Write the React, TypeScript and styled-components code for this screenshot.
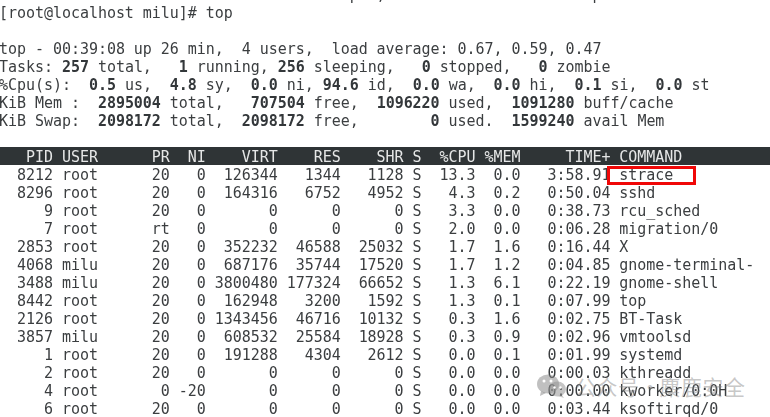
import React from "react";
import styled, { createGlobalStyle } from "styled-components";

const Global = createGlobalStyle`
  html, body { margin: 0; padding: 0; background: #fff; overflow: hidden; }
`;

const Page = styled.div`
  position: relative;
  width: 770px;
  height: 417px;
  overflow: hidden;
  background: #fff;
`;

const Terminal = styled.div`
  margin-top: -15px;
  font-family: "DejaVu Sans Mono", monospace;
  font-size: 15px;
  letter-spacing: -0.04px;
  line-height: 20px;
  color: #3b3e40;
  white-space: pre;
  filter: blur(0.25px);
`;

const Line = styled.div`
  height: 18px;
  margin-left: -1px;
`;

const HeaderBar = styled.div`
  height: 18px;
  background: #2f3436;
  color: #e6e7e7;
`;

const HeaderText = styled.div`
  margin-left: -1px;
`;

const B = styled.b`
  font-weight: 700;
  color: #33373a;
`;

const Row = styled.div`
  position: relative;
  height: 18px;
  margin-left: -1px;
`;

const Highlight = styled.div`
  position: absolute;
  left: 608px;
  top: 1px;
  width: 89px;
  height: 19px;
  box-sizing: border-box;
  border: 3px solid #f00707;
`;

const Watermark = styled.div`
  position: absolute;
  left: 537px;
  top: 372px;
  display: flex;
  align-items: center;
  gap: 9px;
  font-family: "Noto Sans CJK SC", sans-serif;
  font-size: 21px;
  font-weight: 400;
  line-height: 28px;
  letter-spacing: 0.5px;
  color: rgba(130, 130, 130, 0.45);
  white-space: pre;
`;

const Dot = styled.span`
  display: inline-block;
  width: 20px;
  text-align: center;
`;

const WechatIcon = styled.svg`
  width: 29px;
  height: 24px;
  flex: none;
`;

const rows = [
  "  8212 root      20   0  126344   1344   1128 S  13.3  0.0   3:58.91 strace",
  "  8296 root      20   0  164316   6752   4952 S   4.3  0.2   0:50.04 sshd",
  "     9 root      20   0       0      0      0 S   3.3  0.0   0:38.73 rcu_sched",
  "     7 root      rt   0       0      0      0 S   2.0  0.0   0:06.28 migration/0",
  "  2853 root      20   0  352232  46588  25032 S   1.7  1.6   0:16.44 X",
  "  4068 milu      20   0  687176  35744  17520 S   1.7  1.2   0:04.85 gnome-terminal-",
  "  3488 milu      20   0 3800480 177324  66652 S   1.3  6.1   0:22.19 gnome-shell",
  "  8442 root      20   0  162948   3200   1592 S   1.3  0.1   0:07.99 top",
  "  2126 root      20   0 1343456  46716  10132 S   0.3  1.6   0:02.75 BT-Task",
  "  3857 milu      20   0  608532  25584  18928 S   0.3  0.9   0:02.96 vmtoolsd",
  "     1 root      20   0  191288   4304   2612 S   0.0  0.1   0:01.99 systemd",
  "     2 root      20   0       0      0      0 S   0.0  0.0   0:00.03 kthreadd",
  "     4 root       0 -20       0      0      0 S   0.0  0.0   0:00.00 kworker/0:0H",
  "     6 root      20   0       0      0      0 S   0.0  0.0   0:03.44 ksoftirqd/0",
];

export default function App() {
  return (
    <Page>
      <Global />
      <Terminal>
        <Line>{"                                       p  ,                       p"}</Line>
        <Line>[root@localhost milu]# top</Line>
        <Line> </Line>
        <Line>top - 00:39:08 up 26 min,  4 users,  load average: 0.67, 0.59, 0.47</Line>
        <Line>Tasks: <B>257</B> total,   <B>1</B> running, <B>256</B> sleeping,   <B>0</B> stopped,   <B>0</B> zombie</Line>
        <Line>%Cpu(s):  <B>0.5</B> us,  <B>4.8</B> sy,  <B>0.0</B> ni, <B>94.6</B> id,  <B>0.0</B> wa,  <B>0.0</B> hi,  <B>0.1</B> si,  <B>0.0</B> st</Line>
        <Line>KiB Mem :  <B>2895004</B> total,   <B>707504</B> free,  <B>1096220</B> used,  <B>1091280</B> buff/cache</Line>
        <Line>KiB Swap:  <B>2098172</B> total,  <B>2098172</B> free,        <B>0</B> used.  <B>1599240</B> avail Mem</Line>
        <Line> </Line>
        <HeaderBar>
          <HeaderText>{"   PID USER      PR  NI    VIRT    RES    SHR S  %CPU %MEM     TIME+ COMMAND"}</HeaderText>
        </HeaderBar>
        {rows.map((r, i) => (
          <Row key={i}>
            {r}
            {i === 0 && <Highlight />}
          </Row>
        ))}
      </Terminal>
      <Watermark>
        <WechatIcon viewBox="0 0 29 24">
          <ellipse cx="11" cy="10" rx="11" ry="9.5" fill="rgba(130,130,130,0.5)" />
          <path d="M4 17 L3 22 L9 19 Z" fill="rgba(130,130,130,0.5)" />
          <ellipse cx="20.5" cy="15" rx="8.5" ry="7.5" fill="rgba(150,150,150,0.55)" />
          <path d="M25 21 L27 24 L21 22 Z" fill="rgba(150,150,150,0.55)" />
          <circle cx="7" cy="7" r="1.5" fill="#fff" />
          <circle cx="14" cy="7" r="1.5" fill="#fff" />
          <circle cx="17.5" cy="13.5" r="1.2" fill="#fff" />
          <circle cx="23.5" cy="13.5" r="1.2" fill="#fff" />
        </WechatIcon>
        <span>公众号<Dot>·</Dot>麋鹿安全</span>
      </Watermark>
    </Page>
  );
}
